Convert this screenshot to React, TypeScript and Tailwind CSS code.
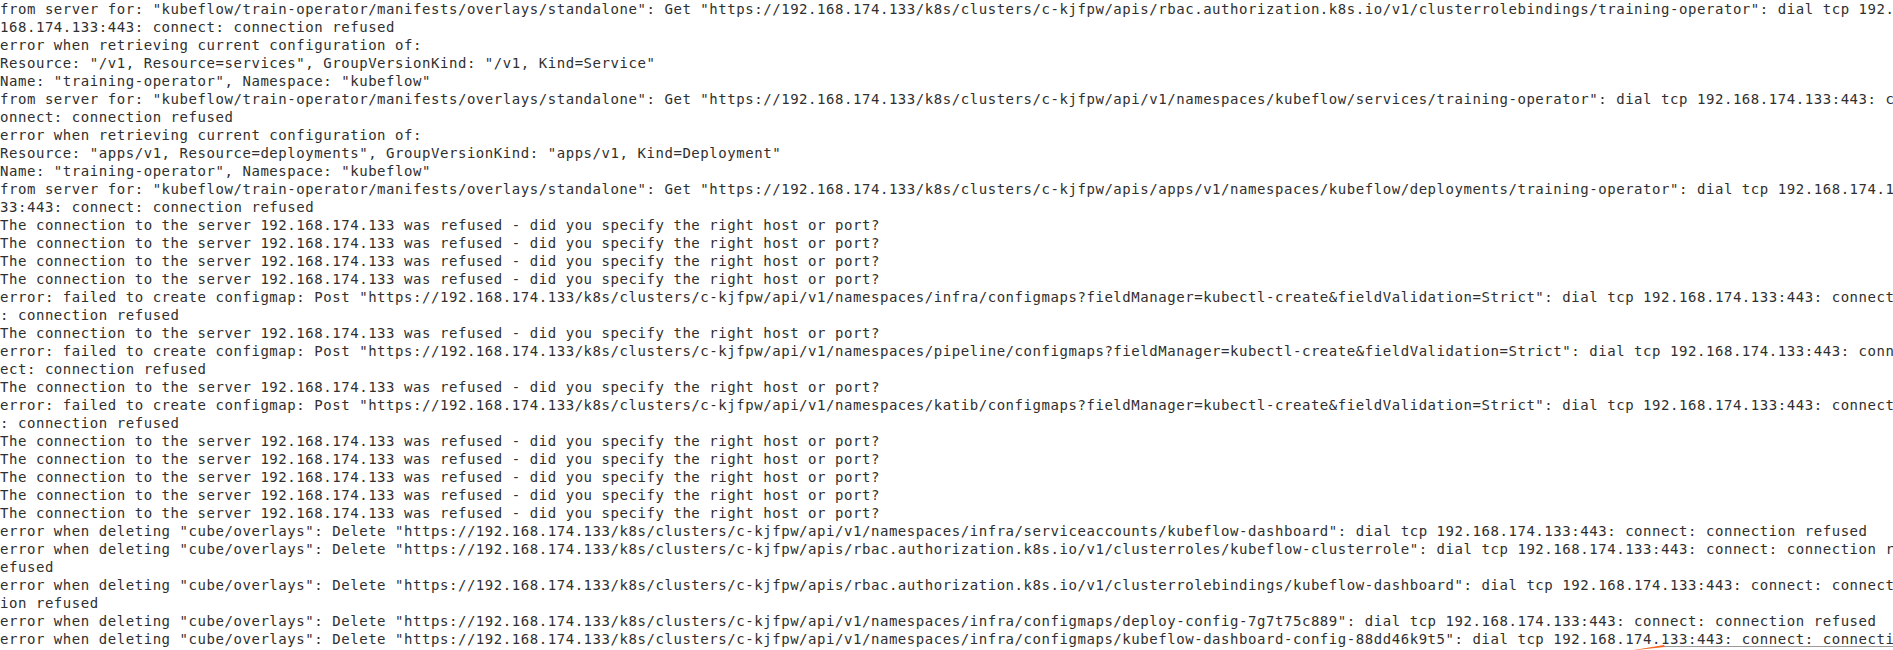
const REFUSED =
  'The connection to the server 192.168.174.133 was refused - did you specify the right host or port?'
const FROM = 'from server for: "kubeflow/train-operator/manifests/overlays/standalone": Get "https://192.168.174.133/k8s/clusters/c-kjfpw/'
const POST = 'error: failed to create configmap: Post "https://192.168.174.133/k8s/clusters/c-kjfpw/api/v1/namespaces/'
const DEL = 'error when deleting "cube/overlays": Delete "https://192.168.174.133/k8s/clusters/c-kjfpw/'

// terminal output, already wrapped at 211 columns
const lines = [
  FROM + 'apis/rbac.authorization.k8s.io/v1/clusterrolebindings/training-operator": dial tcp 192.',
  '168.174.133:443: connect: connection refused',
  'error when retrieving current configuration of:',
  'Resource: "/v1, Resource=services", GroupVersionKind: "/v1, Kind=Service"',
  'Name: "training-operator", Namespace: "kubeflow"',
  FROM + 'api/v1/namespaces/kubeflow/services/training-operator": dial tcp 192.168.174.133:443: c',
  'onnect: connection refused',
  'error when retrieving current configuration of:',
  'Resource: "apps/v1, Resource=deployments", GroupVersionKind: "apps/v1, Kind=Deployment"',
  'Name: "training-operator", Namespace: "kubeflow"',
  FROM + 'apis/apps/v1/namespaces/kubeflow/deployments/training-operator": dial tcp 192.168.174.1',
  '33:443: connect: connection refused',
  REFUSED,
  REFUSED,
  REFUSED,
  REFUSED,
  POST + 'infra/configmaps?fieldManager=kubectl-create&fieldValidation=Strict": dial tcp 192.168.174.133:443: connect',
  ': connection refused',
  REFUSED,
  POST + 'pipeline/configmaps?fieldManager=kubectl-create&fieldValidation=Strict": dial tcp 192.168.174.133:443: conn',
  'ect: connection refused',
  REFUSED,
  POST + 'katib/configmaps?fieldManager=kubectl-create&fieldValidation=Strict": dial tcp 192.168.174.133:443: connect',
  ': connection refused',
  REFUSED,
  REFUSED,
  REFUSED,
  REFUSED,
  REFUSED,
  DEL + 'api/v1/namespaces/infra/serviceaccounts/kubeflow-dashboard": dial tcp 192.168.174.133:443: connect: connection refused',
  DEL + 'apis/rbac.authorization.k8s.io/v1/clusterroles/kubeflow-clusterrole": dial tcp 192.168.174.133:443: connect: connection r',
  'efused',
  DEL + 'apis/rbac.authorization.k8s.io/v1/clusterrolebindings/kubeflow-dashboard": dial tcp 192.168.174.133:443: connect: connect',
  'ion refused',
  DEL + 'api/v1/namespaces/infra/configmaps/deploy-config-7g7t75c889": dial tcp 192.168.174.133:443: connect: connection refused',
  DEL + 'api/v1/namespaces/infra/configmaps/kubeflow-dashboard-config-88dd46k9t5": dial tcp 192.168.174.133:443: connect: connecti',
]

export default function App() {
  return (
    <div className="relative h-[650px] w-[1893px] overflow-hidden bg-white">
      <div className="font-['DejaVu_Sans_Mono',monospace] text-[14px] leading-[18px] tracking-[0.55px] text-[#2f2f2f]">
        {lines.map((line, i) => (
          <div key={i} className="h-[18px] whitespace-pre">
            {line}
          </div>
        ))}
      </div>
      {/* bits of the screenshot tool peeking in at the bottom */}
      <div className="absolute bottom-[3px] left-[1663px] h-px w-[230px] bg-[#9a9a9a]" />
      <svg className="absolute bottom-0 left-[1632px]" width="34" height="6" viewBox="0 0 34 6">
        <path d="M2 6 L32 1 L33 3 L4 6 Z" fill="#f26522" />
      </svg>
    </div>
  )
}
